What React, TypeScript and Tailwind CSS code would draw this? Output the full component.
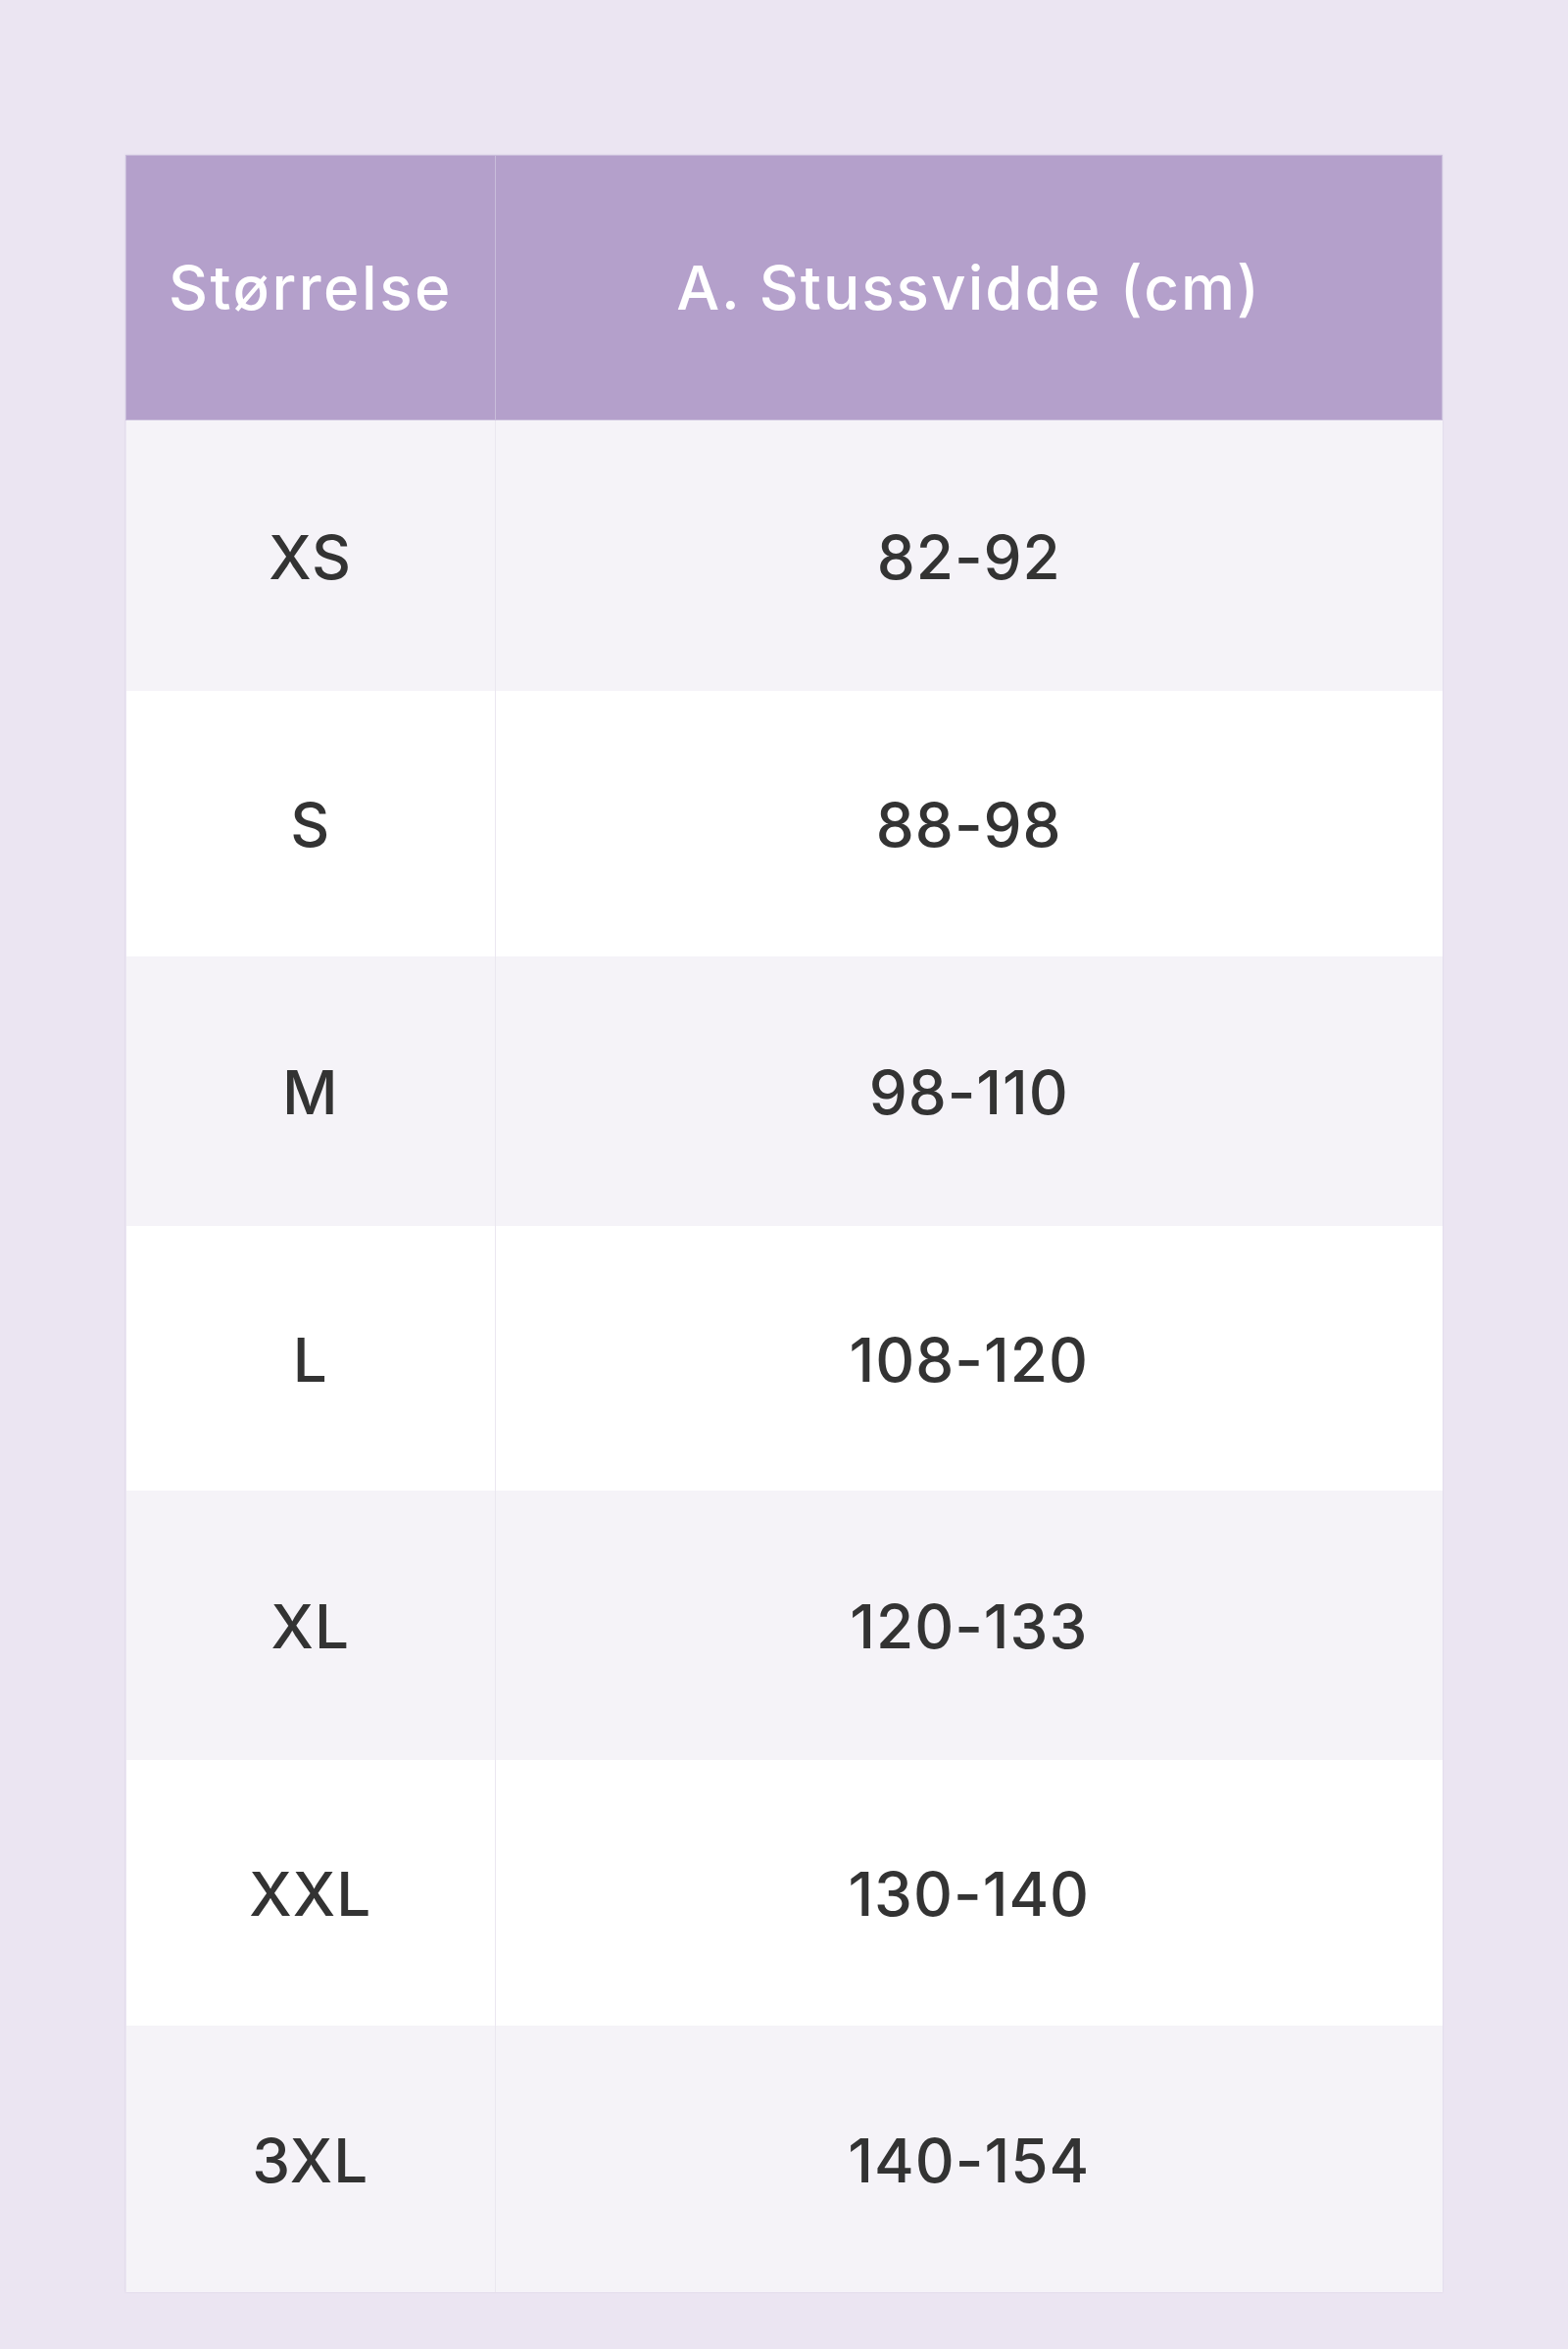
const rows = [
  { size: "XS", hip: "82-92", h: "h-[276px]" },
  { size: "S", hip: "88-98", h: "h-[271px]" },
  { size: "M", hip: "98-110", h: "h-[275px]" },
  { size: "L", hip: "108-120", h: "h-[270px]" },
  { size: "XL", hip: "120-133", h: "h-[275px]" },
  { size: "XXL", hip: "130-140", h: "h-[271px]" },
  { size: "3XL", hip: "140-154", h: "h-[272px]" },
];

export default function App() {
  return (
    <div
      className="min-h-[2397px] bg-[#ebe5f2] pt-[158px] pl-[128px]"
      style={{ fontFamily: "Inter, 'Noto Sans', sans-serif" }}
    >
      <table className="w-[1344px] table-fixed border-collapse shadow-[0_0_2px_rgba(120,100,150,0.15)]">
        <colgroup>
          <col className="w-[377px]" />
          <col />
        </colgroup>
        <thead>
          <tr className="h-[270px] bg-[#b4a0cb]">
            <th className="border border-[#c9bddb] text-center align-middle text-[62px] font-medium tracking-[2.5px] text-white">
              Størrelse
            </th>
            <th className="border border-[#c9bddb] text-center align-middle text-[62px] font-medium tracking-[2px] text-white">
              A. Stussvidde (cm)
            </th>
          </tr>
        </thead>
        <tbody>
          {rows.map((row, i) => (
            <tr
              key={row.size}
              className={`${row.h} ${i % 2 === 0 ? "bg-[#f5f3f8]" : "bg-white"}`}
            >
              <td className="border-r border-[#ebe7f0] pt-[3px] text-center align-middle text-[62px] font-medium tracking-[1px] text-[#333333]">
                {row.size}
              </td>
              <td className="pt-[3px] text-center align-middle text-[62px] font-medium tracking-[1px] text-[#333333]">
                {row.hip}
              </td>
            </tr>
          ))}
        </tbody>
      </table>
    </div>
  );
}
